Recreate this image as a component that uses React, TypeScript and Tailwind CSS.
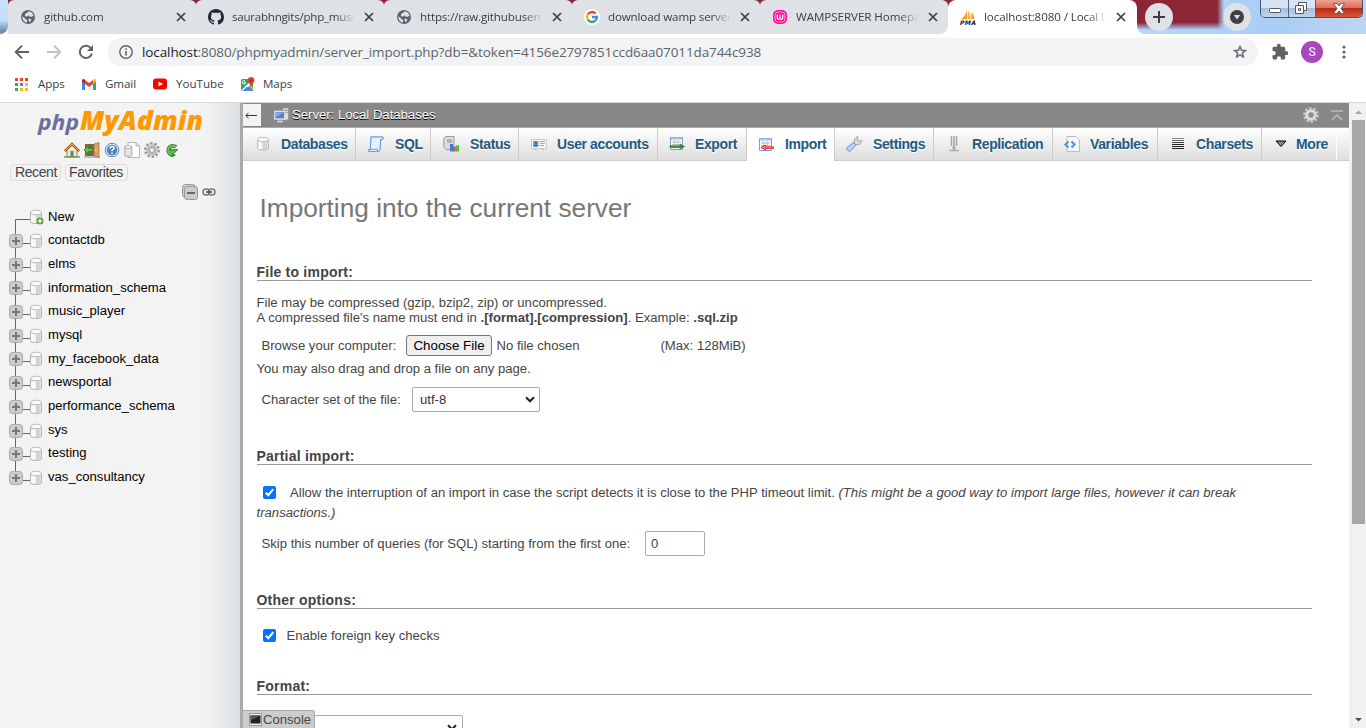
import React from "react";

const UI = "font-['Open_Sans','Noto_Sans',sans-serif]";

function Globe() {
  return (
    <svg width="16" height="16" viewBox="0 0 16 16">
      <circle cx="8" cy="8" r="7" fill="#5f6368" />
      <path d="M2.4 7.2 7 11.3v2.3C4.300 13.300 2 10.500 2.400 7.200ZM6 4.200c1-.8 2.300-.4 2.500-2 2.600.2 5 2.400 5.100 5.100-1.400-.5-1.600.7-3 .6-1.200-.2-.9-1.500-2-1.500-1 .2-1.700 1.800-3.300.9C4.500 6.200 5 5 6 4.200Zm2.500 5.300 2.300.5.600 1-1.800 2.200-1-1.600Z" fill="#dee1e6" />
    </svg>
  );
}

function Octocat() {
  return (
    <svg width="16" height="16" viewBox="0 0 16 16" fill="#24292f">
      <path d="M8 0C3.580 0 0 3.580 0 8c0 3.540 2.290 6.530 5.470 7.590.4.070.55-.17.55-.38 0-.19-.01-.82-.01-1.490-2.010.37-2.530-.49-2.690-.94-.09-.23-.48-.94-.82-1.130-.28-.15-.68-.52-.01-.53.63-.01 1.080.58 1.230.82.72 1.210 1.870.87 2.330.66.070-.52.28-.87.510-1.070-1.780-.2-3.640-.89-3.640-3.950 0-.87.310-1.590.82-2.150-.08-.2-.36-1.020.08-2.120 0 0 .67-.21 2.200.82.64-.18 1.320-.27 2-.27s1.360.09 2 .27c1.530-1.040 2.200-.82 2.200-.82.44 1.100.16 1.920.08 2.120.51.56.82 1.270.82 2.150 0 3.070-1.870 3.750-3.650 3.950.29.25.54.73.54 1.480 0 1.070-.01 1.930-.01 2.200 0 .21.15.46.55.38A8.010 8.010 0 0 0 16 8c0-4.420-3.580-8-8-8Z" />
    </svg>
  );
}

function GoogleG() {
  return (
    <svg width="16" height="16" viewBox="0 0 16 16">
      <circle cx="8" cy="8" r="8" fill="#fff" />
      <g fill="none" strokeWidth="2.300">
        <path d="M3.700 5.500A5 5 0 0 1 11.600 4.500" stroke="#ea4335" />
        <path d="M3.700 10.500a5 5 0 0 1 0-5" stroke="#fbbc05" />
        <path d="M11.400 11.700a5 5 0 0 1-7.700-1.200" stroke="#34a853" />
        <path d="M8 8h5a5 5 0 0 1-1.600 3.700" stroke="#4285f4" />
      </g>
    </svg>
  );
}

function WampIcon() {
  return (
    <svg width="16" height="16" viewBox="0 0 16 16" fill="none">
      <rect x="1" y="1" width="14" height="14" rx="5" fill="#ff0a96" />
      <rect x="3" y="3" width="10" height="10" rx="3" stroke="#ffd0ea" strokeWidth=".8" />
      <path d="M5.300 5.500v4l1.300 1L8 9.300l1.400 1.200 1.300-1v-4M8 5.500v4" stroke="#fff" strokeWidth="1.200" />
    </svg>
  );
}

function PmaIcon() {
  return (
    <svg width="16" height="16" viewBox="0 0 16 16">
      <path d="M7 .5V10H1.300C4 8 6.300 5 7 .5Z" fill="#f89c0e" />
      <path d="M8 1.500c2 2 2.800 5 2.700 8.500H7.600Z" fill="#fbb45c" />
      <path d="M11.500 3c1.500 2 2.500 4 2.800 7h-3Z" fill="#f89c0e" />
      <text x="0" y="15.600" fontSize="6.200" fontWeight="bold" fontStyle="italic" fontFamily="DejaVu Sans" textLength="16" fill="#23234f">PMA</text>
    </svg>
  );
}

function Close() {
  return (
    <svg width="10" height="10" viewBox="0 0 10 10" stroke="#3c4043" strokeWidth="1.700">
      <path d="m1 1 8 8M9 1 1 9" />
    </svg>
  );
}

const browserTabs = [
  { icon: <Globe />, title: "github.com", track: "tracking-[-0.150px]" },
  { icon: <Octocat />, title: "saurabhngits/php_music", track: "tracking-[-0.250px]" },
  { icon: <Globe />, title: "https://raw.githubuserco", track: "tracking-[-0.150px]" },
  { icon: <GoogleG />, title: "download wamp server -", track: "tracking-[-0.150px]" },
  { icon: <WampIcon />, title: "WAMPSERVER Homepag", track: "tracking-[-0.050px]" },
];

function TabBody({ icon, title, track }: { icon: React.ReactNode; title: string; track: string }) {
  return (
    <div className="flex h-[34px] w-[188px] items-center pl-3">
      <span className="w-4 shrink-0">{icon}</span>
      <span className={"ml-2 w-[124px] shrink-0 overflow-hidden whitespace-nowrap text-[11.600px] leading-4 text-[#3c4043] [mask-image:linear-gradient(to_right,black_84%,transparent_99%)] " + track}>
        {title}
      </span>
      <span className="ml-2"><Close /></span>
    </div>
  );
}

function TabStrip() {
  return (
    <div className="flex h-[34px] bg-white">
      <div className="w-2 rounded-br-[8px] bg-[linear-gradient(#cbe2fb_0%,#c3dcf8_60%,#6f8fb5_90%)]" />
      <div className="flex bg-[linear-gradient(#8a2635_50%,#fff_50%)]">
        {browserTabs.map((t, i) => (
          <div key={t.title} className={"relative rounded-t-[7px_5px] bg-[#dee1e6] " + (i === 4 ? "rounded-br-[8px]" : "")}>
            <TabBody {...t} />
            {i < 4 && <div className="absolute right-[-1px] top-2 h-[19px] w-px bg-[#80868b]" />}
          </div>
        ))}
        <div className="rounded-t-[8px] bg-white pr-px">
          <TabBody icon={<PmaIcon />} title="localhost:8080 / Local Da" track="tracking-[-0.100px]" />
        </div>
      </div>
      <div className="flex flex-1 overflow-hidden rounded-bl-[8px] bg-[linear-gradient(to_right,#b5d8fd,#a9cdf5_60%,#bdd6f2)]">
        <div className="flex w-[87px] items-start bg-[linear-gradient(#8a2635_66%,#8a263500_88%)] pl-[8px] pt-[3px] [mask-image:linear-gradient(to_right,black_92%,transparent)]">
          <div className="flex size-7 items-center justify-center rounded-full bg-[#dee1e6]">
            <svg width="12" height="12" stroke="#3c4043" strokeWidth="2"><path d="M0 6h12M6 0v12" /></svg>
          </div>
        </div>
        <div className="flex flex-1 items-start justify-between pr-[3px]">
          <div className="-ml-[1px] mt-[3px] flex size-7 items-center justify-center rounded-full bg-[#dee1e6]">
            <svg width="14" height="14"><circle cx="7" cy="7" r="7" fill="#3c4043" /><path d="M3.800 5h6.400L7 9.500Z" fill="#dee1e6" /></svg>
          </div>
          <div className="flex h-[18px] w-[103px] overflow-hidden rounded-b-[5px] border border-t-0 border-[#42536b] shadow-[0_0_1px_#fff]">
            <div className="flex w-7 items-end justify-center border-r border-[#52657e] bg-[linear-gradient(#d5e5f5_45%,#a6bfd9_50%,#bfd7ed)] pb-1">
              <svg width="12" height="5"><rect x=".5" y=".5" width="11" height="4" rx="1" fill="#fff" stroke="#535766" /></svg>
            </div>
            <div className="flex w-[27px] items-center justify-center border-r border-[#52657e] bg-[linear-gradient(#d5e5f5_45%,#a6bfd9_50%,#bfd7ed)] pr-[3px] pb-[2px]">
              <svg width="12" height="12" fill="#fff" stroke="#535766"><path d="M3.500.5h8v8h-8Z" /><path d="M.5 3.500h8v8h-8Z" /><path d="M3.500 6.500h2v2h-2Z" /></svg>
            </div>
            <div className="flex flex-1 items-center justify-center bg-[linear-gradient(#eaa192_0%,#d9705a_45%,#bb2a12_50%,#d4583a)] pb-px">
              <svg width="12" height="11" viewBox="0 0 12 11"><path d="M.5.500h3.300L6 3l2.200-2.500h3.300L8 5.500l3.500 5H8.200L6 8l-2.200 2.500H.5L4 5.500Z" fill="#fff" stroke="#535766" strokeWidth=".9" /></svg>
            </div>
          </div>
        </div>
      </div>
    </div>
  );
}

function Toolbar() {
  return (
    <div className="flex h-[36px] items-center bg-white">
      <svg className="ml-[14px]" width="16" height="16" viewBox="0 0 16 16" fill="none" stroke="#5f6368" strokeWidth="1.900"><path d="M15 8H2.200M8 1.700 1.700 8 8 14.300" /></svg>
      <svg className="ml-4" width="16" height="16" viewBox="0 0 16 16" fill="none" stroke="#bdc1c6" strokeWidth="1.900"><path d="M1 8h12.800M8 1.700 14.300 8 8 14.300" /></svg>
      <svg className="ml-4" width="16" height="16" viewBox="0 0 16 16" fill="none" stroke="#5f6368" strokeWidth="2"><path d="M13.800 9.500A6.100 6.100 0 1 1 12.200 3.600L14 5.500" /><path d="M15 1v6H9Z" fill="#5f6368" stroke="none" /></svg>
      <div className="ml-[14px] flex h-7 w-[1150px] items-center rounded-full bg-[#f1f3f4] pl-[11px] pr-[10px]">
        <svg width="14" height="14" viewBox="0 0 14 14" fill="none" stroke="#5f6368" strokeWidth="1.400"><circle cx="7" cy="7" r="6.200" /><path d="M7 6v4.500M7 3.300v1.500" strokeWidth="1.600" /></svg>
        <span className="ml-[9px] flex-1 whitespace-nowrap text-[13.500px] leading-5 tracking-[-0.105px] text-[#5f6368]">
          <span className="text-[#202124]">localhost</span>:8080/phpmyadmin/server_import.php?db=&amp;token=4156e2797851ccd6aa07011da744c938
        </span>
        <svg width="16" height="16" viewBox="0 0 24 24" fill="#5f6368"><path d="m22 9.240-7.190-.62L12 2 9.190 8.630 2 9.240l5.460 4.730L5.820 21 12 17.270 18.180 21l-1.630-7.030L22 9.240ZM12 15.400l-3.760 2.270 1-4.280-3.320-2.880 4.380-.38L12 6.100l1.710 4.040 4.380.38-3.320 2.880 1 4.280L12 15.400Z" stroke="#5f6368" strokeWidth=".6" /></svg>
      </div>
      <svg className="ml-[13px]" width="18" height="18" viewBox="0 0 24 24" fill="#5f6368"><path d="M20.500 11H19V7c0-1.100-.9-2-2-2h-4V3.500a2.500 2.500 0 0 0-5 0V5H4c-1.100 0-1.990.9-1.990 2v3.800H3.500c1.490 0 2.700 1.210 2.700 2.700s-1.210 2.700-2.700 2.700H2V20c0 1.100.9 2 2 2h3.800v-1.500c0-1.490 1.210-2.700 2.700-2.700s2.700 1.210 2.700 2.700V22H17c1.100 0 2-.9 2-2v-4h1.500a2.500 2.500 0 0 0 0-5Z" /></svg>
      <div className="ml-[12px] flex size-[22px] items-center justify-center rounded-full bg-[#ab47bc] font-[Roboto,sans-serif] text-[12px] text-white">S</div>
      <svg className="ml-[19px]" width="4" height="14" fill="#5f6368"><circle cx="2" cy="2" r="1.600" /><circle cx="2" cy="7" r="1.600" /><circle cx="2" cy="12" r="1.600" /></svg>
    </div>
  );
}

const appColors = ["#ea4335", "#ea4335", "#ea4335", "#34a853", "#4285f4", "#fbbc05", "#34a853", "#fbbc05", "#fbbc05"];

function Bookmarks() {
  return (
    <div className="flex h-[32px] items-center bg-white pb-[4px] text-[11.600px] tracking-[-0.100px] text-[#3c4043]">
      <svg className="ml-[15px]" width="13" height="13">
        {appColors.map((c, i) => <rect key={i} x={(i % 3) * 5} y={Math.floor(i / 3) * 5} width="3" height="3" fill={c} />)}
      </svg>
      <span className="ml-[10px] w-[28px]">Apps</span>
      <svg className="ml-[16px]" width="14" height="11" viewBox="0 0 14 11">
        <path d="M0 1.500V11h3V4.500Z" fill="#4285f4" /><path d="M14 1.500V11h-3V4.500Z" fill="#34a853" />
        <path d="M3 1v4l4 3 4-3V1L7 4Z" fill="#ea4335" /><path d="M0 1.500C0 0 1.700-.5 3 .8V5L0 2.800Z" fill="#c5221f" /><path d="M14 1.500C14 0 12.300-.5 11 .8V5l3-2.200Z" fill="#fbbc04" />
      </svg>
      <span className="ml-[9px] w-[31px]">Gmail</span>
      <svg className="ml-[17px]" width="14" height="12"><rect y=".5" width="14" height="11" rx="3" fill="#f00" /><path d="M5.500 3.500v5L10 6Z" fill="#fff" /></svg>
      <span className="ml-[9px] w-[48px] tracking-[0px]">YouTube</span>
      <svg className="ml-[16px]" width="15" height="15" viewBox="0 0 15 15">
        <rect x="1" y="2" width="12" height="12" rx="1.500" fill="#34a853" /><path d="M1 13 8 6l5 6v1l-1 1H2Z" fill="#4285f4" /><path d="m1.200 13.500 10-10 1.800 2L4 14H2Z" fill="#fff" /><path d="M10 8l3 3v2L9 9Z" fill="#fbbc05" /><path d="m2.500 14 4.500-4.500 4.500 4.500Z" fill="#4285f4" />
        <path d="M11 0a3.500 3.500 0 0 0-3.500 3.500C7.500 6 10.500 7 11 10c.5-3 3.500-4 3.500-6.500A3.500 3.500 0 0 0 11 0Z" fill="#ea4335" /><circle cx="11" cy="3.500" r="1.300" fill="#9c2b22" />
        <path d="M5.600 5.600H3.900m1.700 0A1.700 1.700 0 1 1 5 4" stroke="#fff" fill="none" />
      </svg>
      <span className="ml-[8px]">Maps</span>
    </div>
  );
}

function Db({ plus = false }: { plus?: boolean }) {
  return (
    <svg width="16" height="16" viewBox="0 0 16 16">
      <path d="M2.500 3.200v9.600c0 2.200 11 2.200 11 0V3.200" fill="#e3e3e3" stroke="#b4b4b4" />
      <path d="M4 6v7M6.500 6.500v7.300" stroke="#fff" strokeWidth="2" /><path d="M9 6.500v7.300M11 6.200V13" stroke="#cfcfcf" strokeWidth="1.500" />
      <ellipse cx="8" cy="3.500" rx="5.500" ry="2.300" fill="#fafafa" stroke="#bcbcbc" />
      {plus && <g><circle cx="12" cy="12" r="3.500" fill="#4e9a2c" /><path d="M12 9.800v4.400M9.800 12h4.400" stroke="#fff" strokeWidth="1.400" /></g>}
    </svg>
  );
}

function Gear({ light = false }: { light?: boolean }) {
  return (
    <svg width="16" height="16" viewBox="0 0 16 16" fill="none">
      <circle cx="8" cy="8" r="6.700" stroke={light ? "#ccc" : "#8e8e8e"} strokeWidth="2.200" strokeDasharray="2.400 1.810" />
      <circle cx="8" cy="8" r="4.300" stroke={light ? "#ddd" : "#c0c0c0"} strokeWidth="3" />
      <circle cx="8" cy="8" r="2.500" stroke={light ? "#aaa" : "#8a8a8a"} strokeWidth=".9" />
    </svg>
  );
}

const databases = ["New", "contactdb", "elms", "information_schema", "music_player", "mysql", "my_facebook_data", "newsportal", "performance_schema", "sys", "testing", "vas_consultancy"];

function Sidebar() {
  return (
    <aside className="h-full w-[240px] shrink-0 bg-[linear-gradient(to_right,#f3f3f3_205px,#dcdfe2_238px)]">
      <div className="flex h-[38px] items-start pl-[37px] pt-[4px]">
        <svg width="168" height="32" viewBox="0 0 168 32" fontFamily="'Open Sans',sans-serif" fontStyle="italic">
          <text x="1" y="22.500" fontSize="21.500" fontWeight="700" fill="#6c6c9e" textLength="41" lengthAdjust="spacingAndGlyphs">php</text>
          <text x="43" y="22.500" fontSize="26.500" fontWeight="800" fill="#f90" textLength="123" lengthAdjust="spacingAndGlyphs">MyAdmin</text>
        </svg>
      </div>
      <div className="flex h-4 gap-1 pl-[64px] mt-[1px]">
        <svg width="16" height="16" viewBox="0 0 16 16"><path d="M3 8v6.500h10V8L8 3Z" fill="#eeeae0" stroke="#9b8b69" /><path d="M6.500 9h3v5.500h-3Z" fill="#777" /><path d="M.8 9 8 2l7.200 7" stroke="#a8640f" strokeWidth="2.600" fill="none" /><path d="M1 8.500 8 2l7 6.500" stroke="#f0bd6b" strokeWidth=".9" fill="none" /><path d="M0 15h16" stroke="#629f4a" strokeWidth="1.500" /></svg>
        <svg width="16" height="16" viewBox="0 0 16 16"><path d="M1 2h9v12H1Z" fill="#7d6547" /><path d="M10 2l5-1.500v15L10 14Z" fill="#d8a35c" stroke="#a66e2f" strokeWidth=".7" /><circle cx="12" cy="8" r=".7" fill="#fff" /><path d="M0 8l4.500-4v2.500h4v3h-4V12Z" fill="#61c048" stroke="#2c7d22" strokeWidth=".8" /><path d="M0 15h16" stroke="#888" /></svg>
        <svg width="16" height="16" viewBox="0 0 16 16"><circle cx="8" cy="8" r="6.800" fill="#d9e8f7" stroke="#6389bd" /><circle cx="8" cy="8" r="5.200" fill="#4d82c4" /><path d="M6 6.500C6 3.800 10 4 10 6.200 10 7.500 8 7.500 8 9.200M8 10.500v1.500" stroke="#fff" strokeWidth="1.500" fill="none" /></svg>
        <svg width="16" height="16" viewBox="0 0 16 16"><path d="M4 .5h8L15.500 4v11.500H4Z" fill="#fff" stroke="#b5b5b5" /><path d="M12 .5V4h3.500" fill="#ddd" stroke="#b5b5b5" /><path d="M.8 5v8.500c0 1.200 7 1.200 7 0V5" fill="#e5e5e5" stroke="#aaa" /><ellipse cx="4.300" cy="5" rx="3.500" ry="1.400" fill="#fff" stroke="#aaa" /></svg>
        <Gear />
        <svg width="16" height="16" viewBox="0 0 16 16" fill="none"><path d="M12 5A4.600 4.600 0 1 0 8.500 13" stroke="#33842b" strokeWidth="3.800" /><path d="M11.800 5A4.500 4.500 0 1 0 8.500 12.800" stroke="#70c563" strokeWidth="1.900" /><path d="M5.500 7.500H14L9.800 11.500Z" fill="#58ae4c" stroke="#33842b" strokeWidth=".8" /><path d="M8 11v4.500l4-2.500Z" fill="#33842b" /></svg>
      </div>
      <div className="mt-[6px] flex h-[17px] gap-1 pl-[10px] text-[14px] leading-[15px] text-[#444]">
        <span className="w-[51px] rounded-[4px] border border-[#ddd] pl-[4px] tracking-[-0.400px]">Recent</span>
        <span className="w-[63px] rounded-[4px] border border-[#ddd] pl-[3px] tracking-[-0.400px]">Favorites</span>
      </div>
      <div className="mt-[3px] flex h-4 items-center pl-[182px]">
        <svg width="16" height="16" fill="#ccc" stroke="#999"><rect x=".5" y=".5" width="13" height="13" rx="3" /><rect x="2.500" y="2.500" width="13" height="13" rx="2.500" /><path d="M5 9h8" stroke="#666" strokeWidth="2" /></svg>
        <svg className="ml-1" width="14" height="8" viewBox="0 0 14 8" fill="none" stroke="#777" strokeWidth="1.500"><rect x="1" y="1" width="6.500" height="6" rx="3" /><rect x="6.500" y="1" width="6.500" height="6" rx="3" /><path d="M4 4h6" stroke="#444" /></svg>
      </div>
      <ul className="mt-[4.500px]">
        {databases.map((name, i) => (
          <li key={name} className="flex h-[23.690px] items-center">
            <svg className="ml-[9px] shrink-0 overflow-visible" width="21" height="24">
              {i === 0 ? (
                <path d="M21 15.500H6.500V24" fill="none" stroke="#666" />
              ) : (
                <g>
                  <path d={i === databases.length - 1 ? "M6.500 0v12M13 15.500h8" : "M6.500 0v24M13 15.500h8"} stroke="#666" fill="none" />
                  <rect x=".5" y="6.500" width="13" height="13" rx="3" fill="#ccc" stroke="#aaa" />
                  <path d="M3 13h8M7 9v8" stroke="#777" strokeWidth="2" />
                </g>
              )}
            </svg>
            <span className="-ml-[2px] mt-[2px] flex h-4"><Db plus={i === 0} /></span>
            <span className="ml-1 text-[13.120px] text-black">{name}</span>
          </li>
        ))}
      </ul>
    </aside>
  );
}

const sheet = <g><path d="M1.500 1.500h12v12h-12Z" fill="#f5f9ff" stroke="#7a9fd6" /><path d="M2 2.500h11" stroke="#a9c4ec" strokeWidth="2" /><path d="M3 6h9M3 8.500h9M3 11h9M5.500 4v8M9 4v8" stroke="#a8b8ad" strokeWidth=".8" /></g>;

const navTabs: { label: string; w: string; pad: string; icon: React.ReactNode }[] = [
  { label: "Databases", w: "w-[112px]", pad: "pl-[12px] gap-[10px]", icon: <g><path d="M2.500 3.500v9c0 2.200 11 2.200 11 0v-9" fill="#e3e3e3" stroke="#bbb" /><path d="M5 6v7" stroke="#fff" strokeWidth="3" /><path d="M9 6.500v7.300M11 6.200V13" stroke="#cfcfcf" strokeWidth="1.500" /><ellipse cx="8" cy="3.500" rx="5.500" ry="2.200" fill="#fafafa" stroke="#bcbcbc" /></g> },
  { label: "SQL", w: "w-[75px]", pad: "pl-[12px] gap-[11px]", icon: <g><path d="M3 .8h11.500c1 0 1 2.700-.5 2.700h-1.200L12 13.500c-.2 1-1 2-2 2H1.300c-1 0-.9-2.200 0-2.200h1Z" fill="#e4f1fd" stroke="#6ba0dc" strokeWidth="1.200" /><path d="M10 15.300c-1-.3-1-2-.3-2H2.500" stroke="#6ba0dc" fill="none" /></g> },
  { label: "Status", w: "w-[88px]", pad: "pl-[12px] gap-[11px]", icon: <g><path d="M3 .5h8v13H3L.8 11V2.500Z" fill="#dedede" stroke="#999" /><path d="M4 4h5M4 6h5" stroke="#888" /><path d="M7 8h3v7.500H7Z" fill="#3e7be0" /><path d="M10 10.500h2.800v5H10Z" fill="#e5523c" /><path d="M12.800 9.300H16v6.200h-3.200Z" fill="#5cba3c" /></g> },
  { label: "User accounts", w: "w-[139px]", pad: "pl-[12px] gap-[10px]", icon: <g><path d="M.5 3.500h15v9H.5Z" fill="#f7f7f7" stroke="#ccc" /><path d="M2 5h5.500v5.500H2Z" fill="#6aa9e6" /><circle cx="4.800" cy="7" r="1.400" fill="#a25a26" /><path d="M2.500 10.500c0-2.500 4.500-2.500 4.500 0Z" fill="#3465a4" /><path d="M9 5.500h5M9 7.500h5M9 9.500h4" stroke="#9ab" /><path d="M3 13.500h3M10 13.500h3" stroke="#ccc" /></g> },
  { label: "Export", w: "w-[89px]", pad: "pl-[11px] gap-[10px]", icon: <g>{sheet}<path d="M1 9.800h10V8l4.500 2.500L11 13v-1.500H1Z" fill="#3f8f35" stroke="#2b7423" strokeWidth=".6" /></g> },
  { label: "Import", w: "w-[88px]", pad: "pl-[11px] gap-[11px]", icon: <g>{sheet}<path d="M15.500 9.800h-8V8L3 10.500 7.500 13v-1.500h8Z" fill="#f77" stroke="#d22" strokeWidth=".8" /></g> },
  { label: "Settings", w: "w-[99px]", pad: "pl-[11px] gap-[11px]", icon: <g><path d="M8.500 7.500C7.500 4.500 9 1 12 .8l-.8 3.200 1.300 1.200L15.500 4.500C15.800 7 13 9.500 10 8.500Z" fill="#ddd" stroke="#999" strokeWidth=".9" /><path d="M7.500 6.500 10 9l-5 5.500c-2.200 2-5.700-1-3.800-3.300Z" fill="#b8d0f5" stroke="#7492d0" /></g> },
  { label: "Replication", w: "w-[119px]", pad: "pl-[12px] gap-[10px]", icon: <g><path d="M5.500 0v10M8 0v14M10.500 0v10" stroke="#a5a5a5" strokeWidth="1.500" /><path d="M6.500 11 8 13l1.500-2M3 14.500h10" stroke="#aaa" strokeWidth="1.500" /></g> },
  { label: "Variables", w: "w-[105px]", pad: "pl-[11px] gap-[10px]", icon: <g><path d="M3 .5h9L15.500 4v11.500H3Z" fill="#f8f8f8" stroke="#bbb" /><path d="M4.500 5.500 1.500 8.500l3 3M7.500 5.500l3 3-3 3" stroke="#4b97e8" strokeWidth="2.200" fill="none" /></g> },
  { label: "Charsets", w: "w-[104px]", pad: "pl-[12px] gap-[10px]", icon: <g stroke="#222"><path d="M2 2.500h12" stroke="#888" /><path d="M2 4.500h12" stroke="#666" /><path d="M2 6.500h12" stroke="#444" /><path d="M2 8.500h12M2 10.500h12M2 12.500h12" /></g> },
  { label: "More", w: "w-[75px]", pad: "pl-[11px] gap-[7px]", icon: <path d="M3 5h10L8 10.500Z" fill="#888" stroke="#000" /> },
];

function NavTabs() {
  return (
    <nav className="flex h-[34px] border-t border-[#aaa] bg-[linear-gradient(#fff,#dcdcdc)]">
      {navTabs.map((t, i) => (
        <div
          key={t.label}
          className={
            "flex shrink-0 items-center whitespace-nowrap text-[14px] font-bold tracking-[-0.380px] text-[#235a81] [text-shadow:0_1px_0_#fff] " + t.w + " " + t.pad +
            (i === 0 ? "" : " border-l border-l-[#ccc]") +
            (t.label === "Import" ? " bg-white" : " border-b border-b-[#ccc]")
          }
        >
          <svg className="shrink-0" width="16" height="16" viewBox="0 0 16 16" fill="none">{t.icon}</svg>
          {t.label}
        </div>
      ))}
      <div className="flex-1 border-b border-l border-b-[#ccc] border-l-white" />
    </nav>
  );
}

function Legend({ children, gap }: { children: React.ReactNode; gap: string }) {
  return <h3 className={"flex h-[17px] items-center whitespace-nowrap border-b border-[#999] text-[14px] font-bold tracking-[0.220px] text-[#444] " + gap}>{children}</h3>;
}

function Check() {
  return (
    <svg className="inline-block" width="13" height="13" viewBox="0 0 13 13"><rect width="13" height="13" rx="2" fill="#0075ff" /><path d="m2.800 6.700 2.500 2.500 5-6" stroke="#fff" strokeWidth="2" fill="none" /></svg>
  );
}

function Chevron() {
  return <svg width="10" height="7" viewBox="0 0 10 7" fill="none" stroke="#222" strokeWidth="2"><path d="m1 1.300 4 4 4-4" /></svg>;
}

function ImportForm() {
  return (
    <main className="flex-1 overflow-hidden bg-white pl-[13.500px] pr-[37px] text-[13.120px] text-[#444]">
      <h2 className="flex h-[94px] items-center whitespace-nowrap pl-[3px] pt-[2px] text-[26.240px] text-[#777]">Importing into the current server</h2>
      <Legend gap="mt-[9px]">File to import:</Legend>
      <p className="mt-[14px] leading-[15px]">
        File may be compressed (gzip, bzip2, zip) or uncompressed.<br />
        A compressed file's name must end in <b>.[format].[compression]</b>. Example: <b>.sql.zip</b>
      </p>
      <div className="mt-[9px] flex h-[22px] items-center pl-[5px]">
        <span className="w-[144.500px] pt-px">Browse your computer:</span>
        <span className="flex h-[21px] w-[86px] items-center justify-center rounded-[3px] border border-[#767676] bg-[#efefef] pt-px text-[13.330px] text-black">Choose File</span>
        <span className="ml-[4.500px] w-[164px] pt-px">No file chosen</span>
        <span className="pt-px">(Max: 128MiB)</span>
      </div>
      <div className="flex h-[24px] items-center pt-[2px]">You may also drag and drop a file on any page.</div>
      <div className="mt-[7px] flex h-[25px] items-center pl-[5px]">
        <span className="w-[150.500px]">Character set of the file:</span>
        <span className="flex h-[25px] w-[128px] items-center justify-between rounded-[2px] border border-[#aaa] pl-[7px] pr-[4px] text-[#333]">utf-8<Chevron /></span>
      </div>
      <Legend gap="mt-[36px]">Partial import:</Legend>
      <p className="mt-[18px] leading-[20px]">
        <span className="inline-flex h-[18px] w-[33.500px] items-center pl-[6.500px] align-top"><Check /></span>
        Allow the interruption of an import in case the script detects it is close to the PHP timeout limit. <i className="tracking-[0.020px]">(This might be a good way to import large files, however it can break transactions.)</i>
      </p>
      <div className="mt-[8px] flex h-[25px] items-center pl-[5px]">
        <span className="w-[383.500px]">Skip this number of queries (for SQL) starting from the first one:</span>
        <span className="flex h-[25px] w-[60px] items-center rounded-[2px] border border-[#aaa] pl-[5px]">0</span>
      </div>
      <Legend gap="mt-[36px]">Other options:</Legend>
      <div className="mt-[16px] flex h-[20px] items-center pl-[6.500px]"><Check /><span className="ml-[10.500px] pt-[2px]">Enable foreign key checks</span></div>
      <Legend gap="mt-[33px]">Format:</Legend>
      <div className="mt-[20px] flex h-[25px] w-[206px] items-center justify-end rounded-[2px] border border-[#aaa] pr-[5px]"><Chevron /></div>
    </main>
  );
}

export default function App() {
  return (
    <div className={"flex h-[728px] w-[1366px] flex-col overflow-hidden bg-white " + UI}>
      <TabStrip />
      <Toolbar />
      <Bookmarks />
      <div className="flex h-[626px] border-t border-[#d5d8db] font-['Liberation_Sans',Arial,sans-serif]">
        <Sidebar />
        <div className="w-[3px] shrink-0 bg-[#aaa]" />
        <div className="relative flex w-[1106px] flex-col">
          <div className="flex h-6 shrink-0 items-center bg-[#888]">
            <div className="flex h-[22px] w-[18px] items-center justify-center bg-[#f3f3f3] pr-[2px]">
              <svg width="12" height="7" fill="none" stroke="#333"><path d="M12 3.500H1M3.500.800.800 3.500l2.700 2.700" /></svg>
            </div>
            <svg className="ml-[13px]" width="16" height="16" viewBox="0 0 16 16"><path d="M9 1h5.500v12H9Z" fill="#ddd" stroke="#999" /><path d="M10 3.500h3.500M10 5.500h3.500" stroke="#888" /><path d="M.8 4.500h10v7.500H.8Z" fill="#4a80cc" stroke="#ddd" strokeWidth="1.400" /><path d="M2 5.800h7.500L2 10Z" fill="#7faae2" /><path d="M3 14.500h6" stroke="#ddd" strokeWidth="1.500" /></svg>
            <span className="ml-[2px] whitespace-nowrap text-[13.120px] text-white [text-shadow:0_1px_0_#000]">Server: Local Databases</span>
            <span className="ml-auto"><Gear light /></span>
            <svg className="ml-[12px] mr-[6px]" width="12" height="11" fill="none" stroke="#bbb" strokeWidth="1.600"><path d="M0 1h12M1 10l5-5 5 5" /></svg>
          </div>
          <NavTabs />
          <ImportForm />
          <div className="absolute bottom-0 left-0 flex h-[18px] w-[72px] items-center rounded-tr-[3px] border-r border-t border-[#aaa] bg-[#ccc] pl-[6px] text-[13.120px] text-[#444]">
            <svg width="13" height="13"><rect x=".5" y=".5" width="12" height="12" fill="#eee" stroke="#999" /><rect x="1.500" y="2.500" width="10" height="8" fill="#222" /><path d="M1.500 2.500h10l-10 5Z" fill="#555" /></svg>
            <span className="ml-[1px]">Console</span>
          </div>
        </div>
        <div className="flex w-[17px] flex-col items-center bg-[#f1f1f1] pl-[1px]">
          <svg width="15" height="17"><path d="M4 11h7L7.500 7.500Z" fill="#a3a3a3" /></svg>
          <div className="h-[404px] w-[13px] bg-[#a8a8a8]" />
          <svg className="mt-auto" width="15" height="17"><path d="M4 7h7l-3.500 3.500Z" fill="#505050" /></svg>
        </div>
      </div>
    </div>
  );
}
